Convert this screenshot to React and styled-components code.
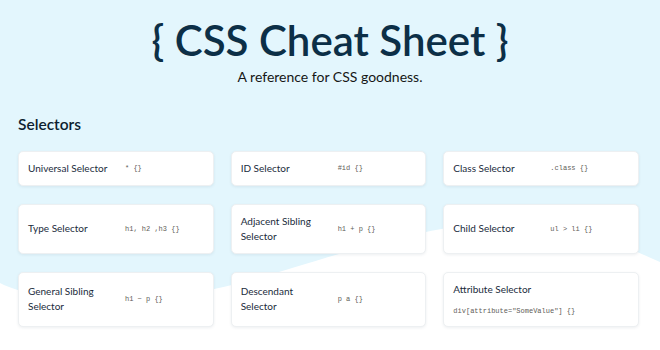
import styled, { createGlobalStyle } from "styled-components";

const selectors = [
  { label: "Universal Selector", code: "* {}" },
  { label: "ID Selector", code: "#id {}" },
  { label: "Class Selector", code: ".class {}" },
  { label: "Type Selector", code: "h1, h2 ,h3 {}" },
  { label: "Adjacent Sibling\nSelector", code: "h1 + p {}" },
  { label: "Child Selector", code: "ul > li {}" },
  { label: "General Sibling\nSelector", code: "h1 ~ p {}" },
  { label: "Descendant\nSelector", code: "p a {}" },
  { label: "Attribute Selector", code: 'div[attribute="SomeValue"] {}', stacked: true },
];

const App = () => {
  return (
    <>
      <GlobalStyle />
      <Page>
        <Wave viewBox="0 0 660 350" preserveAspectRatio="none" aria-hidden="true">
          <path
            d="M0,283 C40,305 160,305 240,283 C320,262 440,215 540,222 C590,226 620,245 660,262 L660,350 L0,350 Z"
            fill="#ffffff"
          />
        </Wave>
        <Content>
          <Header>
            <Title>{"{ CSS Cheat Sheet }"}</Title>
            <Subtitle>A reference for CSS goodness.</Subtitle>
          </Header>
          <Section>
            <SectionTitle>Selectors</SectionTitle>
            <Grid>
              {selectors.map((item) => (
                <Card key={item.label} $stacked={item.stacked}>
                  <Label>{item.label}</Label>
                  <Code>{item.code}</Code>
                </Card>
              ))}
            </Grid>
          </Section>
        </Content>
      </Page>
    </>
  );
};

const GlobalStyle = createGlobalStyle`
  * {
    box-sizing: border-box;
  }
  body {
    margin: 0;
    background: #ffffff;
    font-family: Lato, "Noto Sans", sans-serif;
  }
`;

const Page = styled.div`
  position: relative;
  width: 100%;
  min-height: 100vh;
  background: #e3f6fd;
  overflow: hidden;
`;

const Wave = styled.svg`
  position: absolute;
  inset: 0;
  width: 100%;
  height: 350px;
  z-index: 0;
`;

const Content = styled.div`
  position: relative;
  z-index: 1;
  display: flex;
  flex-direction: column;
`;

const Header = styled.header`
  display: flex;
  flex-direction: column;
  align-items: center;
  padding-top: 19px;
`;

const Title = styled.h1`
  margin: 0;
  font-family: Lato, sans-serif;
  font-size: 42px;
  font-weight: 600;
  line-height: 1;
  color: #0c2f47;
`;

const Subtitle = styled.p`
  margin: 9px 0 0;
  font-family: Lato, sans-serif;
  font-size: 14px;
  font-weight: 400;
  line-height: 1;
  color: #161616;
`;

const Section = styled.section`
  padding: 33px 21px 0 18px;
`;

const SectionTitle = styled.h2`
  margin: 0;
  font-family: Lato, sans-serif;
  font-size: 15.5px;
  font-weight: 600;
  line-height: 1;
  color: #0d1e30;
`;

const Grid = styled.div`
  display: grid;
  grid-template-columns: repeat(3, 1fr);
  column-gap: 17px;
  row-gap: 18px;
  margin-top: 18px;
`;

const Card = styled.div`
  display: ${(p) => (p.$stacked ? "flex" : "grid")};
  flex-direction: column;
  gap: ${(p) => (p.$stacked ? "8px" : "0")};
  grid-template-columns: 97px 1fr;
  align-items: ${(p) => (p.$stacked ? "flex-start" : "center")};
  padding: 9px 9px;
  background: #ffffff;
  border: 1px solid #edf0f2;
  border-radius: 5px;
  box-shadow: 0 1px 3px rgba(20, 50, 80, 0.08);
`;

const Label = styled.span`
  font-family: Lato, sans-serif;
  font-size: 10px;
  font-weight: 400;
  line-height: 15px;
  color: #1a2b3c;
  white-space: pre-line;
`;

const Code = styled.code`
  font-family: "Liberation Mono", "DejaVu Sans Mono", monospace;
  font-size: 7px;
  line-height: 12px;
  color: #615d58;
  white-space: nowrap;
`;

export default App;
